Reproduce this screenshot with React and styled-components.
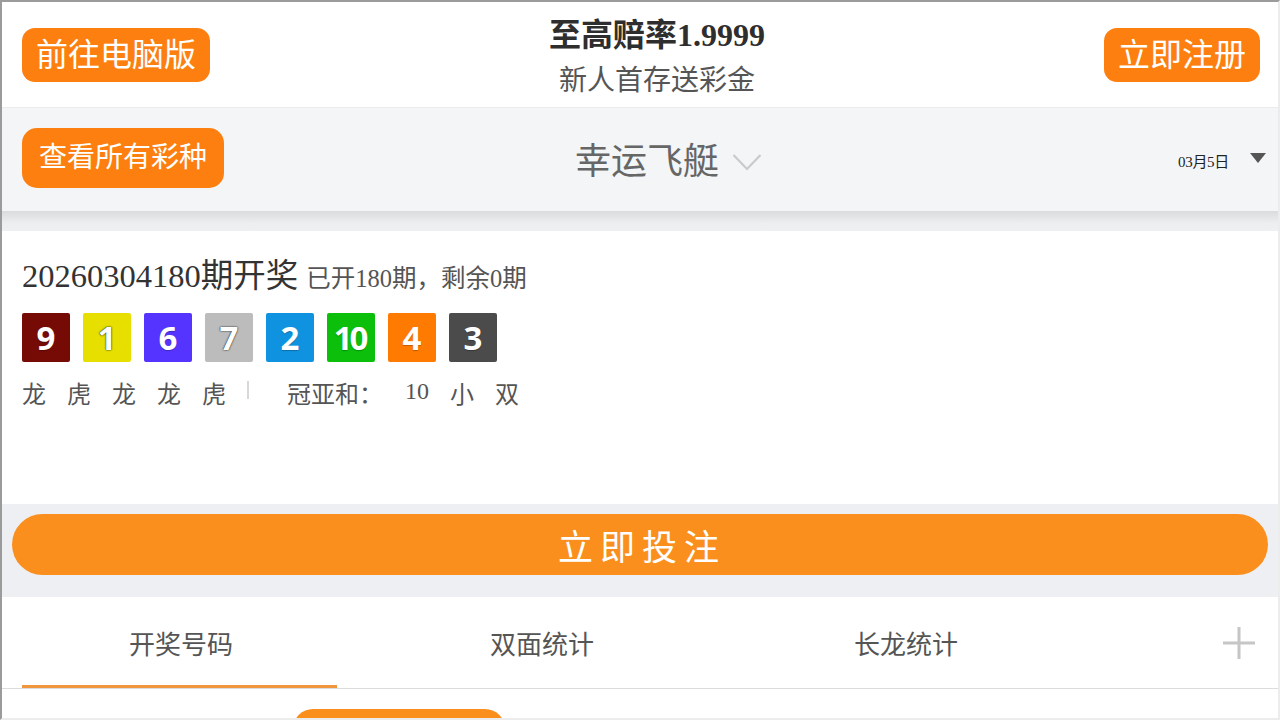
import React from 'react';
import styled, { createGlobalStyle } from 'styled-components';

const SERIF = `"Liberation Serif", "Noto Sans CJK SC", serif`;
const SANS = `"Noto Sans CJK SC", "Noto Sans", sans-serif`;

const GlobalStyle = createGlobalStyle`
  html, body { margin: 0; padding: 0; background: #fff; }
  * { box-sizing: border-box; }
`;

const Frame = styled.div`
  width: 1280px;
  height: 720px;
  overflow: hidden;
  border-style: solid;
  border-width: 2px;
  border-color: #9b9b9b #ececec #ececec #9b9b9b;
  display: flex;
  flex-direction: column;
  font-family: ${SERIF};
  background: #fff;
`;

const Header = styled.header`
  flex: none;
  height: 106px;
  display: flex;
  align-items: center;
  justify-content: space-between;
  padding: 0 18px 0 20px;
  background: #fff;
  border-bottom: 1px solid #ececec;
`;

const OrangeButton = styled.button`
  border: none;
  margin: 0;
  background: #fd7f10;
  color: #fff;
  font-family: ${SERIF};
  font-size: ${p => p.$size || 32}px;
  height: ${p => p.$h || 54}px;
  padding: 0 ${p => p.$pad || 14}px;
  border-radius: ${p => p.$radius || 13}px;
  display: flex;
  align-items: center;
  justify-content: center;
  line-height: 1;
  cursor: pointer;
`;

const HeaderTitle = styled.div`
  display: flex;
  flex-direction: column;
  align-items: center;
  padding-top: 6px;
`;

const Title = styled.div`
  font-size: 32px;
  font-weight: 700;
  color: #2e2e2e;
  line-height: 40px;
`;

const Subtitle = styled.div`
  font-size: 28px;
  color: #555;
  line-height: 38px;
  margin-top: 7px;
`;

const LotteryBar = styled.div`
  flex: none;
  height: 103px;
  display: grid;
  grid-template-columns: 1fr auto 1fr;
  align-items: center;
  padding: 0 12px 0 20px;
  background: #f3f5f7;
  position: relative;
  z-index: 1;
`;

const LotteryName = styled.div`
  position: relative;
  font-size: 36px;
  color: #666;
  line-height: 44px;
  margin-top: 4px;
  margin-left: 6px;
`;

const Chevron = styled.svg`
  position: absolute;
  left: calc(100% + 13px);
  top: 13px;
`;

const DatePicker = styled.div`
  justify-self: end;
  display: flex;
  align-items: center;
  gap: 21px;
  margin-top: 2px;
`;

const DateText = styled.span`
  font-family: ${SERIF};
  font-size: 15px;
  color: #222;
  letter-spacing: -0.3px;
`;

const Triangle = styled.span`
  width: 0;
  height: 0;
  border-left: 8.5px solid transparent;
  border-right: 8.5px solid transparent;
  border-top: 10px solid #555;
  margin-top: -6px;
`;

const ShadowGap = styled.div`
  flex: none;
  height: 20px;
  background: linear-gradient(#dadbdd, #eceef0 60%, #eff0f2);
`;

const Result = styled.section`
  flex: none;
  height: 273px;
  background: #fff;
  padding: 25px 20px 0;
`;

const IssueLine = styled.div`
  display: flex;
  align-items: baseline;
  line-height: 40px;
`;

const Issue = styled.span`
  font-size: 32.5px;
  color: #333;
`;

const IssueInfo = styled.span`
  font-size: 24.5px;
  color: #555;
  margin-left: 8px;
`;

const Balls = styled.div`
  display: flex;
  gap: 13px;
  margin-top: 14px;
`;

const Ball = styled.span`
  width: 48px;
  height: 49px;
  border-radius: 2px;
  background: ${p => p.$bg};
  color: #fff;
  font-family: "Open Sans", "Noto Sans", sans-serif;
  font-weight: 700;
  font-size: 33px;
  letter-spacing: ${p => (p.$wide ? '-3px' : '0')};
  text-indent: ${p => (p.$wide ? '-3px' : '0')};
  display: flex;
  align-items: center;
  justify-content: center;
  line-height: 1;
  text-shadow: ${p => (p.$light ? '0 0 2px rgba(0,0,0,0.75), 0 0 1px rgba(0,0,0,0.8)' : '0 1px 1px rgba(0,0,0,0.25)')};
`;

const Traits = styled.div`
  display: flex;
  align-items: center;
  margin-top: 18px;
  height: 30px;
  font-size: 24px;
  color: #555;
`;

const Trait = styled.span`
  margin-right: ${p => p.$gap ?? 21}px;
  line-height: 30px;
  ${p => p.$raised && 'margin-top: -8px;'}
`;

const Divider = styled.span`
  width: 2px;
  height: 18px;
  background: #d8d8d8;
  margin: -10px 38px 0 0;
`;

const BetBand = styled.div`
  flex: none;
  background: #eeeff3;
  padding: 10px 10px 22px;
`;

const BetButton = styled.button`
  width: 100%;
  height: 61px;
  border: none;
  border-radius: 31px;
  background: #fa8f1e;
  color: #fff;
  font-family: ${SERIF};
  font-size: 35px;
  letter-spacing: 7px;
  padding: 0 0 0 4px;
  display: flex;
  align-items: center;
  justify-content: center;
  cursor: pointer;
`;

const Tabs = styled.nav`
  flex: none;
  height: 92px;
  display: grid;
  grid-template-columns: 358px 364px 364px 1fr;
  border-bottom: 1px solid #dcdcdc;
  background: #fff;
`;

const Tab = styled.div`
  position: relative;
  display: flex;
  align-items: center;
  justify-content: center;
  font-family: ${SANS};
  font-size: 26px;
  color: #555;
  &::after {
    content: '';
    display: ${p => (p.$active ? 'block' : 'none')};
    position: absolute;
    left: 20px;
    width: 315px;
    bottom: 0;
    height: 3px;
    background: #f0973d;
  }
`;

const PlusCell = styled.div`
  display: flex;
  align-items: center;
  justify-content: flex-end;
  padding-right: 22px;
`;

const SubArea = styled.div`
  flex: 1;
  padding: 20px 0 0 291px;
  background: #fff;
`;

const SubPill = styled.div`
  width: 212px;
  height: 40px;
  border-radius: 20px;
  background: #fb8f1e;
`;

const balls = [
  { n: 9, bg: '#760b05' },
  { n: 1, bg: '#e6df00', light: true },
  { n: 6, bg: '#5634ff' },
  { n: 7, bg: '#bcbcbc', light: true },
  { n: 2, bg: '#0f93e0' },
  { n: 10, bg: '#0bbf0b' },
  { n: 4, bg: '#ff7a00' },
  { n: 3, bg: '#4b4b4b' },
];

export default function App() {
  return (
    <>
      <GlobalStyle />
      <Frame>
        <Header>
          <OrangeButton>前往电脑版</OrangeButton>
          <HeaderTitle>
            <Title>至高赔率1.9999</Title>
            <Subtitle>新人首存送彩金</Subtitle>
          </HeaderTitle>
          <OrangeButton>立即注册</OrangeButton>
        </Header>

        <LotteryBar>
          <OrangeButton $size={28} $h={60} $pad={17} $radius={15} style={{ justifySelf: 'start', marginTop: '-4px' }}>查看所有彩种</OrangeButton>
          <LotteryName>
            幸运飞艇
            <Chevron width="30" height="19" viewBox="0 0 30 19" fill="none">
              <path d="M1.5 2 L15 16 L28.5 2" stroke="#cacaca" strokeWidth="2.2" />
            </Chevron>
          </LotteryName>
          <DatePicker>
            <DateText>03月5日</DateText>
            <Triangle />
          </DatePicker>
        </LotteryBar>
        <ShadowGap />

        <Result>
          <IssueLine>
            <Issue>20260304180期开奖</Issue>
            <IssueInfo>已开180期，剩余0期</IssueInfo>
          </IssueLine>
          <Balls>
            {balls.map(b => (
              <Ball key={b.n} $bg={b.bg} $light={b.light} $wide={b.n >= 10}>{b.n}</Ball>
            ))}
          </Balls>
          <Traits>
            <Trait>龙</Trait>
            <Trait>虎</Trait>
            <Trait>龙</Trait>
            <Trait>龙</Trait>
            <Trait>虎</Trait>
            <Divider />
            <Trait $gap={22}>冠亚和：</Trait>
            <Trait $raised>10</Trait>
            <Trait>小</Trait>
            <Trait>双</Trait>
          </Traits>
        </Result>

        <BetBand>
          <BetButton>立即投注</BetButton>
        </BetBand>

        <Tabs>
          <Tab $active>开奖号码</Tab>
          <Tab>双面统计</Tab>
          <Tab>长龙统计</Tab>
          <PlusCell>
            <svg width="34" height="34" viewBox="0 0 34 34">
              <path d="M17 1 V33 M1 17 H33" stroke="#c6c6c6" strokeWidth="3" />
            </svg>
          </PlusCell>
        </Tabs>

        <SubArea>
          <SubPill />
        </SubArea>
      </Frame>
    </>
  );
}
